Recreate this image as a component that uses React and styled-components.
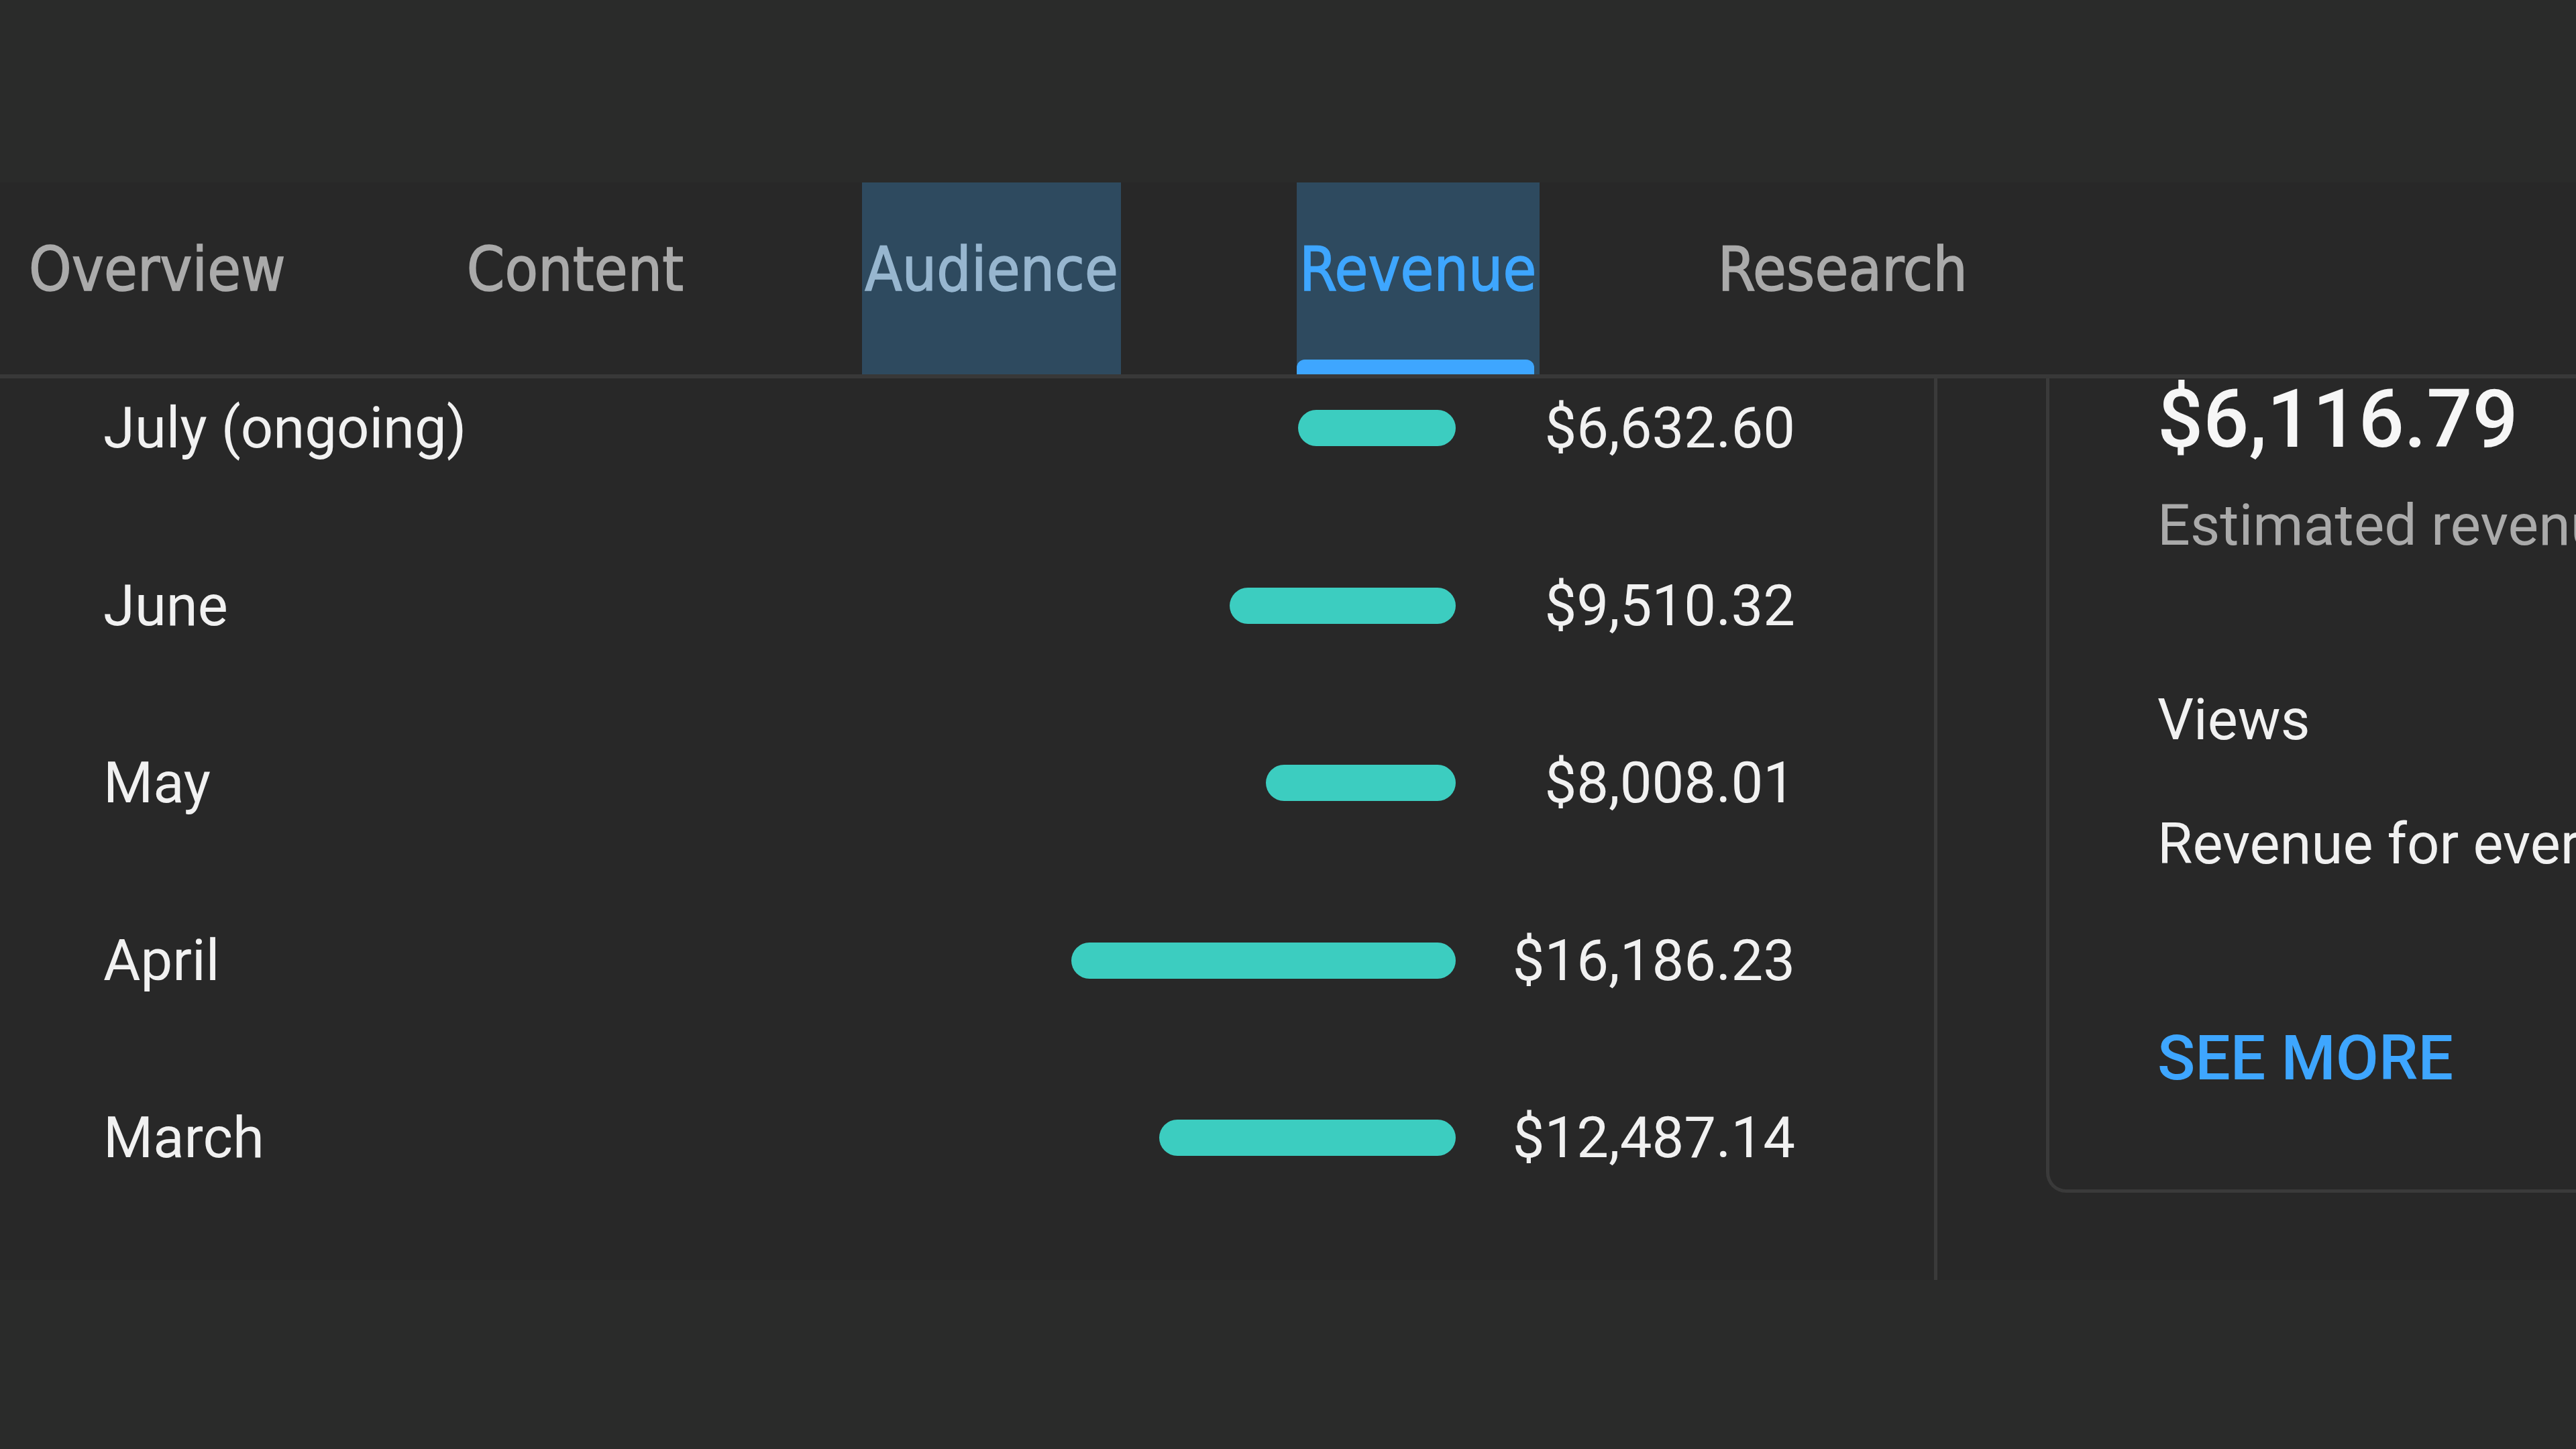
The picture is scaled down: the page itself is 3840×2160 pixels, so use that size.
import React from 'react';
import styled, { createGlobalStyle } from 'styled-components';

const GlobalStyle = createGlobalStyle`
  html, body {
    margin: 0;
    padding: 0;
    background: #2a2b2a;
  }
  body {
    width: 3840px;
    height: 2160px;
    overflow: hidden;
    font-family: Roboto, 'Liberation Sans', sans-serif;
  }
`;

const months = [
  { label: 'July (ongoing)', value: 6632.6 },
  { label: 'June', value: 9510.32 },
  { label: 'May', value: 8008.01 },
  { label: 'April', value: 16186.23 },
  { label: 'March', value: 12487.14 },
];

const tabs = [
  { name: 'Overview' },
  { name: 'Content' },
  { name: 'Audience', highlight: true },
  { name: 'Revenue', highlight: true, active: true },
  { name: 'Research' },
];

const formatMoney = v =>
  '$' + v.toLocaleString('en-US', { minimumFractionDigits: 2, maximumFractionDigits: 2 });

const App = () => {
  return (
    <Page>
      <GlobalStyle />
      <TabBar>
        {tabs.map(tab => (
          <Tab key={tab.name} $highlight={tab.highlight} $active={tab.active}>
            {tab.name}
          </Tab>
        ))}
      </TabBar>

      <Content>
        <MonthList>
          <Rows>
            {months.map(m => (
              <Row key={m.label}>
                <MonthLabel>{m.label}</MonthLabel>
                <Bar style={{ width: `${Math.round(m.value * 0.0354)}px` }} />
                <Amount>{formatMoney(m.value)}</Amount>
              </Row>
            ))}
          </Rows>
        </MonthList>

        <SidePanel>
          <SummaryCard>
            <BigValue>$6,116.79</BigValue>
            <Caption>Estimated revenue</Caption>
            <Metric $gap={188}>Views</Metric>
            <Metric $gap={83}>Revenue for every 1,000 views (RPM)</Metric>
            <SeeMore>SEE MORE</SeeMore>
          </SummaryCard>
        </SidePanel>
      </Content>
    </Page>
  );
};

export default App;

const Page = styled.div`
  display: flex;
  flex-direction: column;
  width: 3840px;
  height: 2160px;
`;

const TabBar = styled.div`
  display: flex;
  gap: 262px;
  margin-top: 272px;
  padding-left: 39px;
  border-bottom: 6px solid #383838;
  background: #282828;
`;

const Tab = styled.div`
  position: relative;
  height: 286px;
  box-sizing: border-box;
  padding: 76px 4px 0;
  font-family: 'DejaVu Sans Condensed', 'DejaVu Sans', sans-serif;
  font-stretch: condensed;
  font-size: 90px;
  line-height: 108px;
  letter-spacing: 0.2px;
  -webkit-text-stroke: 1.6px currentColor;
  white-space: nowrap;
  color: ${p => (p.$active ? '#3ea6ff' : p.$highlight ? '#97b6cf' : '#aaaaaa')};
  background: ${p => (p.$highlight ? '#2e4a5f' : 'transparent')};

  &::after {
    content: '';
    display: ${p => (p.$active ? 'block' : 'none')};
    position: absolute;
    left: 0;
    right: 8px;
    bottom: 0;
    height: 22px;
    border-radius: 12px 12px 0 0;
    background: #3ea6ff;
  }
`;

const Content = styled.div`
  display: flex;
  height: 1344px;
  background: #282828;
  overflow: hidden;
`;

const MonthList = styled.div`
  width: 2888px;
  flex-shrink: 0;
  box-sizing: border-box;
  padding: 0 207px 0 154px;
  border-right: 5px solid #3a3a3a;
  overflow: hidden;
`;

const Rows = styled.div`
  display: flex;
  flex-direction: column;
  margin-top: -58px;
`;

const Row = styled.div`
  display: flex;
  align-items: center;
  height: 264.5px;
  color: #f1f1f1;
  font-size: 85px;
  line-height: 102px;
`;

const MonthLabel = styled.div`
  flex: 1;
  white-space: nowrap;
`;

const Bar = styled.div`
  height: 54px;
  border-radius: 27px;
  background: #3ccdc0;
`;

const Amount = styled.div`
  width: 506px;
  text-align: right;
  white-space: nowrap;
`;

const SidePanel = styled.div`
  flex: 1;
  display: flex;
  align-items: flex-start;
  padding-left: 162px;
  overflow: hidden;
`;

const SummaryCard = styled.div`
  flex: 1;
  display: flex;
  flex-direction: column;
  padding: 0 0 139px 161px;
  border-left: 5px solid #3a3a3a;
  border-bottom: 5px solid #3a3a3a;
  border-bottom-left-radius: 30px;
  white-space: nowrap;
`;

const BigValue = styled.div`
  font-size: 120px;
  line-height: 122px;
  font-weight: 500;
  color: #f6f6f6;
`;

const Caption = styled.div`
  margin-top: 45px;
  font-size: 86px;
  line-height: 103px;
  color: #aaaaaa;
`;

const Metric = styled.div`
  margin-top: ${p => p.$gap}px;
  font-size: 85px;
  line-height: 102px;
  color: #f1f1f1;
`;

const SeeMore = styled.div`
  margin-top: 213px;
  font-size: 93px;
  line-height: 112px;
  font-weight: 500;
  color: #3ea6ff;
`;
